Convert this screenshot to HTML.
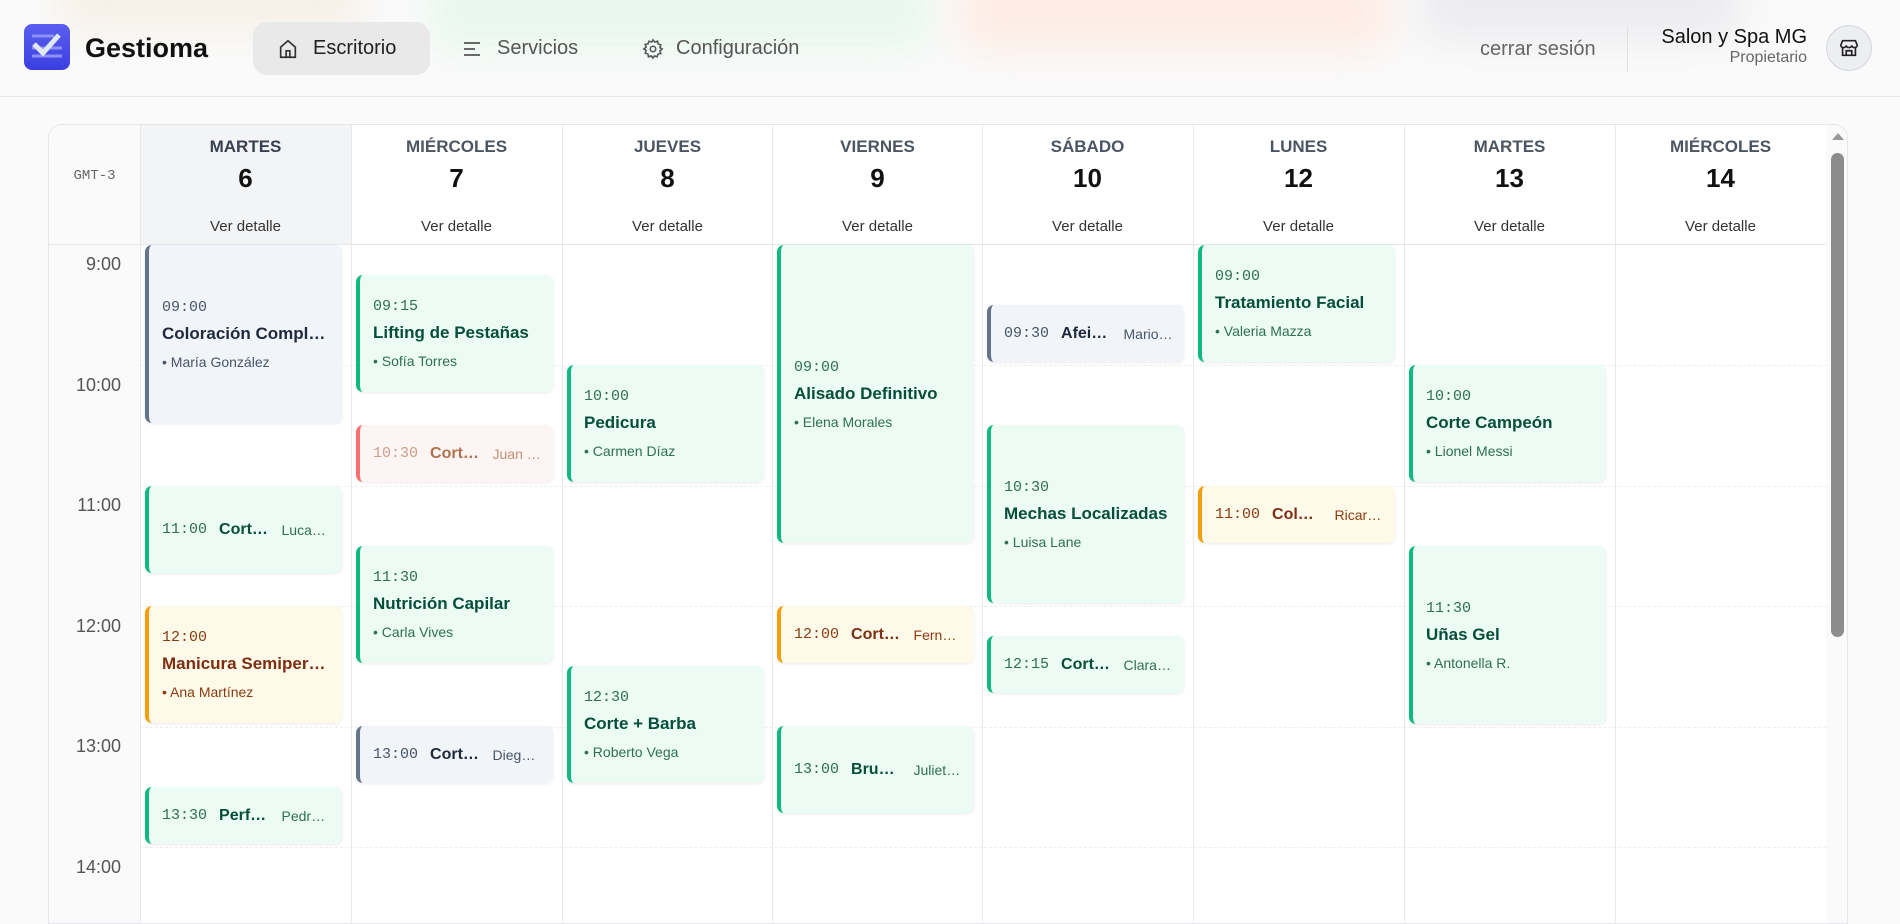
<!DOCTYPE html>
<html><head><meta charset="utf-8">
<style>
*{box-sizing:border-box;margin:0;padding:0}
body{width:1900px;height:898px;overflow:hidden;background:#fafafa;font-family:"Liberation Sans",sans-serif;position:relative}
.blob{position:absolute;filter:blur(18px);border-radius:20px}
.hdr{position:absolute;left:0;top:0;width:1900px;height:97px;border-bottom:1px solid #e5e5e5}
.abs{position:absolute}
.nav{position:absolute;top:22px;height:53px;display:flex;align-items:center;font-size:20px;color:#555}
.cal{position:absolute;left:48px;top:124px;width:1800px;height:800px;background:#fff;border:1px solid #e5e7eb;border-radius:14px 14px 0 0;overflow:hidden}
.col{position:absolute;top:0;height:800px;border-left:1px solid #e8e8e8}
.dh{position:absolute;top:0;width:211px;height:120px;text-align:center;border-bottom:1px solid #e5e7eb}
.dn{position:absolute;top:12px;width:100%;font-size:17px;font-weight:bold;color:#4b5563}
.dd{position:absolute;top:38px;width:100%;font-size:26px;font-weight:bold;color:#111}
.vd{position:absolute;top:93px;width:100%;font-size:15px;color:#333}
.hl{position:absolute;left:91px;width:1686px;border-top:1px dashed #eee}
.hr{position:absolute;left:0;width:72px;text-align:right;font-size:18px;color:#555}
.ev{position:absolute;width:197px;border-radius:7px;border-left:4px solid;box-shadow:0 1px 3px rgba(0,0,0,.08);display:flex;flex-direction:column;justify-content:center;padding-left:13px;padding-right:16px;overflow:hidden}
.ev .t{font-family:"Liberation Mono",monospace;font-size:15px;margin-bottom:8px}
.ev .n{font-weight:bold;font-size:17px;white-space:nowrap;overflow:hidden;text-overflow:ellipsis;margin-bottom:10px}
.ev .c{font-size:14px}
.ev.s{flex-direction:row;align-items:center;justify-content:flex-start;gap:12px;padding-right:10px}
.ev.s .t{margin:0;flex:none}
.ev.s .n{margin:0;flex:1;min-width:0;font-size:16px}
.ev.s .c{flex:1;min-width:0;white-space:nowrap;overflow:hidden;text-overflow:ellipsis}
.g{background:#ecfbf3;border-color:#10b97f;color:#064e3b}.g .t,.g .c{color:#2f6f55}
.y{background:#fefae9;border-color:#f59e0b;color:#7c2d12}.y .t,.y .c{color:#8a3b12}
.b{background:#f1f4f9;border-color:#64748b;color:#1e293b}.b .t,.b .c{color:#475569}
.r{background:#fdf5f3;border-color:#f87171;color:#b0714e}.r .t{color:#c9a08a}.r .c{color:#c4906f}
</style></head><body>
<div class="blob" style="left:60px;top:-30px;width:300px;height:60px;background:#f6efe6"></div>
<div class="blob" style="left:430px;top:-30px;width:500px;height:80px;background:#e8f8ee"></div>
<div class="blob" style="left:960px;top:-30px;width:430px;height:80px;background:#fdece4"></div>
<div class="blob" style="left:1420px;top:-30px;width:320px;height:70px;background:#ececef"></div>
<div class="hdr"></div>
<svg class="abs" style="left:24px;top:24px" width="46" height="46" viewBox="0 0 46 46"><defs><linearGradient id="lg" x1="0" y1="0" x2="0" y2="1"><stop offset="0" stop-color="#5b5ef0"/><stop offset="1" stop-color="#3b3fe0"/></linearGradient></defs><rect width="46" height="46" rx="8" fill="url(#lg)"/><path d="M8 12h22M8 24h30M8 32h30" stroke="#8d90f6" stroke-width="3"/><path d="M10 20l9 9 16-18" fill="none" stroke="#dfe8f5" stroke-width="5"/></svg>
<div class="abs" style="left:85px;top:33px;font-size:27px;font-weight:bold;color:#111">Gestioma</div>
<div class="nav" style="left:253px;width:177px;background:#e9e9e9;border-radius:14px;color:#222;padding-left:24px">
<svg width="22" height="22" viewBox="0 0 24 24" fill="none" stroke="#333" stroke-width="1.8"><path d="M4 10l8-7 8 7v11H4z"/><path d="M10 21v-7h4v7"/></svg><span style="margin-left:14px">Escritorio</span></div>
<div class="nav" style="left:462px"><svg width="20" height="20" viewBox="0 0 20 20" stroke="#555" stroke-width="1.8"><path d="M2 4h16M2 10h11M2 16h16"/></svg><span style="margin-left:15px">Servicios</span></div>
<div class="nav" style="left:642px"><svg width="22" height="22" viewBox="0 0 24 24" fill="none" stroke="#555" stroke-width="1.7"><circle cx="12" cy="12" r="3"/><path d="M12 2l2 2.5 3-1 .5 3 3 1-1 3L22 12l-2.5 2 1 3-3 .5-1 3-3-1L12 22l-2-2.5-3 1-.5-3-3-1 1-3L2 12l2.5-2-1-3 3-.5 1-3 3 1z"/></svg><span style="margin-left:12px">Configuración</span></div>
<div class="abs" style="left:1480px;top:38px;font-size:20px;color:#666">cerrar sesión</div>
<div class="abs" style="left:1627px;top:26px;width:1px;height:46px;background:#e0e0e0"></div>
<div class="abs" style="right:93px;top:26px;font-size:20px;color:#111;text-align:right">Salon y Spa MG</div>
<div class="abs" style="right:93px;top:49px;font-size:16px;color:#666;text-align:right">Propietario</div>
<div class="abs" style="left:1826px;top:25px;width:46px;height:46px;border-radius:50%;background:#eceef2;border:1px solid #d5d8de;display:flex;align-items:center;justify-content:center"><svg width="22" height="22" viewBox="0 0 24 24" fill="none" stroke="#222" stroke-width="1.8"><path d="M3 9l2-5h14l2 5c0 1.5-1.5 2.5-3 2.5S15 10.5 15 9c0 1.5-1.5 2.5-3 2.5S9 10.5 9 9c0 1.5-1.5 2.5-3 2.5S3 10.5 3 9z"/><path d="M5 11v9h14v-9M9 20v-5h6v5"/></svg></div>

<div class="cal">
<div class="abs" style="left:0;top:0;width:91px;height:800px;background:#fafafa"></div>
<div class="abs" style="left:0;top:0;width:91px;height:120px;border-bottom:1px solid #e5e7eb;font-size:14px;color:#666;text-align:center;padding-top:43px;font-family:'Liberation Mono',monospace">GMT-3</div>
<div class="abs" style="left:91px;top:0;width:211px;height:120px;background:#f3f4f5"></div>
<div class="hl" style="top:240px"></div><div class="hl" style="top:361px"></div><div class="hl" style="top:481px"></div><div class="hl" style="top:602px"></div><div class="hl" style="top:722px"></div>
<div class="hr" style="top:129px">9:00</div><div class="hr" style="top:250px">10:00</div><div class="hr" style="top:370px">11:00</div><div class="hr" style="top:491px">12:00</div><div class="hr" style="top:611px">13:00</div><div class="hr" style="top:732px">14:00</div>
<div class="col" style="left:91px"></div><div class="col" style="left:302px"></div><div class="col" style="left:513px"></div><div class="col" style="left:723px"></div><div class="col" style="left:933px"></div><div class="col" style="left:1144px"></div><div class="col" style="left:1355px"></div><div class="col" style="left:1566px"></div><div class="col" style="left:1777px"></div>
<div class="dh" style="left:91px"><div class="dn" style="color:#374151">MARTES</div><div class="dd">6</div><div class="vd">Ver detalle</div></div>
<div class="dh" style="left:302px"><div class="dn">MIÉRCOLES</div><div class="dd">7</div><div class="vd">Ver detalle</div></div>
<div class="dh" style="left:513px"><div class="dn">JUEVES</div><div class="dd">8</div><div class="vd">Ver detalle</div></div>
<div class="dh" style="left:723px"><div class="dn">VIERNES</div><div class="dd">9</div><div class="vd">Ver detalle</div></div>
<div class="dh" style="left:933px"><div class="dn">SÁBADO</div><div class="dd">10</div><div class="vd">Ver detalle</div></div>
<div class="dh" style="left:1144px"><div class="dn">LUNES</div><div class="dd">12</div><div class="vd">Ver detalle</div></div>
<div class="dh" style="left:1355px"><div class="dn">MARTES</div><div class="dd">13</div><div class="vd">Ver detalle</div></div>
<div class="dh" style="left:1566px"><div class="dn">MIÉRCOLES</div><div class="dd">14</div><div class="vd">Ver detalle</div></div>
<div class="abs" style="left:1777px;top:0;width:23px;height:800px;background:#fafafa"></div>
<div class="abs" style="left:1783px;top:8px;width:0;height:0;border-left:6px solid transparent;border-right:6px solid transparent;border-bottom:7px solid #999"></div>
<div class="abs" style="left:1782px;top:28px;width:13px;height:484px;border-radius:7px;background:#8c8c8c"></div>
</div>

<div class="ev b" style="left:145px;top:245px;height:178px"><div class="t">09:00</div><div class="n">Coloración Completa</div><div class="c">• María González</div></div>
<div class="ev g s" style="left:145px;top:486px;height:87px"><div class="t">11:00</div><div class="n">Corte Clásico</div><div class="c">Lucas Pérez</div></div>
<div class="ev y" style="left:145px;top:606px;height:117px"><div class="t">12:00</div><div class="n">Manicura Semipermanente</div><div class="c">• Ana Martínez</div></div>
<div class="ev g s" style="left:145px;top:787px;height:57px"><div class="t">13:30</div><div class="n">Perfilado</div><div class="c">Pedro Ruiz</div></div>

<div class="ev g" style="left:356px;top:275px;height:117px"><div class="t">09:15</div><div class="n">Lifting de Pestañas</div><div class="c">• Sofía Torres</div></div>
<div class="ev r s" style="left:356px;top:425px;height:57px"><div class="t">10:30</div><div class="n">Corte Caballero</div><div class="c">Juan López</div></div>
<div class="ev g" style="left:356px;top:546px;height:117px"><div class="t">11:30</div><div class="n">Nutrición Capilar</div><div class="c">• Carla Vives</div></div>
<div class="ev b s" style="left:356px;top:726px;height:57px"><div class="t">13:00</div><div class="n">Corte Moderno</div><div class="c">Diego Sosa</div></div>

<div class="ev g" style="left:567px;top:365px;height:117px"><div class="t">10:00</div><div class="n">Pedicura</div><div class="c">• Carmen Díaz</div></div>
<div class="ev g" style="left:567px;top:666px;height:117px"><div class="t">12:30</div><div class="n">Corte + Barba</div><div class="c">• Roberto Vega</div></div>

<div class="ev g" style="left:777px;top:245px;height:298px"><div class="t">09:00</div><div class="n">Alisado Definitivo</div><div class="c">• Elena Morales</div></div>
<div class="ev y s" style="left:777px;top:606px;height:57px"><div class="t">12:00</div><div class="n">Corte Dama</div><div class="c">Fernando Gil</div></div>
<div class="ev g s" style="left:777px;top:726px;height:87px"><div class="t">13:00</div><div class="n">Brushing</div><div class="c">Julieta Paz</div></div>

<div class="ev b s" style="left:987px;top:305px;height:57px"><div class="t">09:30</div><div class="n">Afeitado</div><div class="c">Mario Rossi</div></div>
<div class="ev g" style="left:987px;top:425px;height:178px"><div class="t">10:30</div><div class="n">Mechas Localizadas</div><div class="c">• Luisa Lane</div></div>
<div class="ev g s" style="left:987px;top:636px;height:57px"><div class="t">12:15</div><div class="n">Corte Niño</div><div class="c">Clara Kent</div></div>

<div class="ev g" style="left:1198px;top:245px;height:117px"><div class="t">09:00</div><div class="n">Tratamiento Facial</div><div class="c">• Valeria Mazza</div></div>
<div class="ev y s" style="left:1198px;top:486px;height:57px"><div class="t">11:00</div><div class="n">Color Fantasía</div><div class="c">Ricardo Darín</div></div>

<div class="ev g" style="left:1409px;top:365px;height:117px"><div class="t">10:00</div><div class="n">Corte Campeón</div><div class="c">• Lionel Messi</div></div>
<div class="ev g" style="left:1409px;top:546px;height:178px"><div class="t">11:30</div><div class="n">Uñas Gel</div><div class="c">• Antonella R.</div></div>
</body></html>
